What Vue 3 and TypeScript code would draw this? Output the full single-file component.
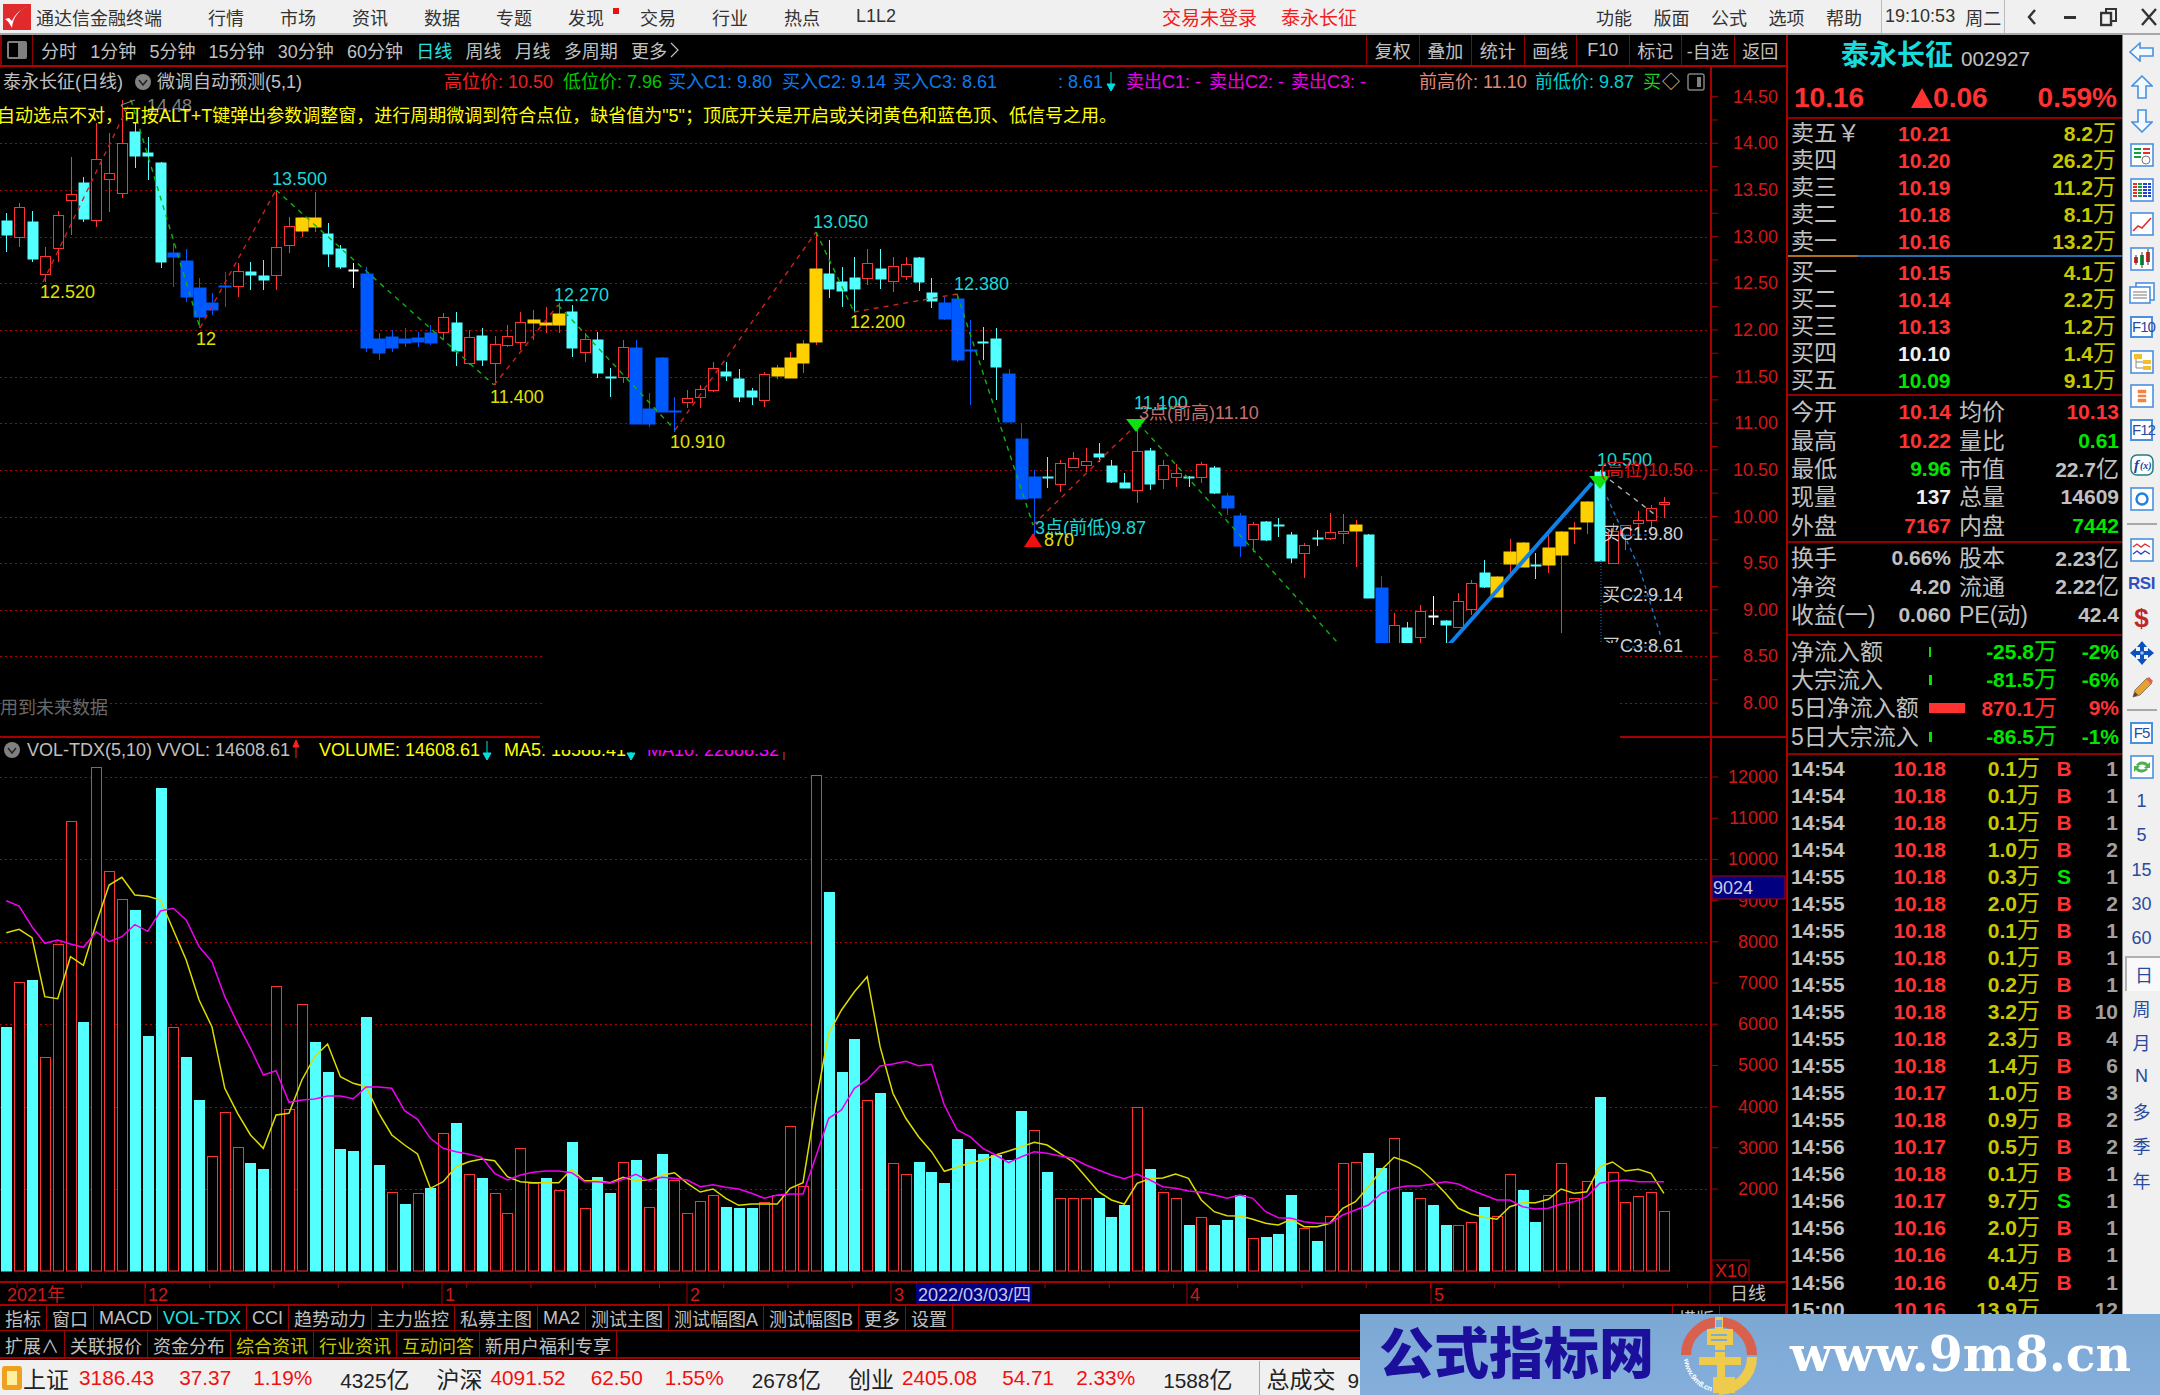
<template>
  <div class="app">
    <header class="topbar">
      <svg class="logo" width="28" height="26" viewBox="0 0 28 26">
        <rect width="28" height="26" fill="#e02a2c" />
        <path d="M25 2 C16 6 10 13 9 24 C7 20 5 17 2 15 L6 14 L9 17 C12 10 18 5 25 2 Z" fill="#fff" />
      </svg>
      <span class="brand">通达信金融终端</span>
      <nav class="menu">
        <span v-for="m in menus" :key="m" class="menu-item" :class="{ found: m === '发现' }">{{ m }}</span>
      </nav>
      <span class="login">交易未登录</span>
      <span class="login stock">泰永长征</span>
      <span class="sys first">功能</span>
      <span class="sys">版面</span>
      <span class="sys">公式</span>
      <span class="sys">选项</span>
      <span class="sys">帮助</span>
      <div class="clock">
        <span>19:10:53</span>
        <span class="week">周二</span>
      </div>
      <div class="win-btns">
        <svg width="16" height="20" viewBox="0 0 16 20"><path d="M11 3 L5 10 L11 17" fill="none" stroke="#333" stroke-width="2.4" /></svg>
        <svg width="14" height="20" viewBox="0 0 14 20"><rect x="1" y="9" width="12" height="3" fill="#333" /></svg>
        <svg width="18" height="20" viewBox="0 0 18 20"><rect x="6" y="2" width="10" height="12" fill="none" stroke="#333" stroke-width="2" /><rect x="1" y="6" width="10" height="12" fill="#f0f0f0" stroke="#333" stroke-width="2.4" /></svg>
        <svg width="16" height="20" viewBox="0 0 16 20"><path d="M1 2 L15 18 M15 2 L1 18" stroke="#333" stroke-width="2.4" /></svg>
      </div>
    </header>

    <div class="main">
      <section class="left">
        <div class="toolbar">
          <div class="tb-icon"><span></span></div>
          <div class="periods">
            <span v-for="p in periods" :key="p" :class="{ on: p === '日线' }">{{ p }}</span>
            <span class="more">更多<svg width="11" height="18" viewBox="0 0 11 18"><path d="M2 2 L9 9 L2 16" fill="none" stroke="#c0c0c0" stroke-width="1.2" /></svg></span>
          </div>
          <div class="tb-btns">
            <span v-for="b in barBtns" :key="b">{{ b }}</span>
          </div>
        </div>

        <svg class="chart" width="1786" height="1239" viewBox="0 67 1786 1239">
          <!-- grid -->
          <line v-for="g in grid" :key="'g' + g" class="grid" x1="0" x2="1711" :y1="g" :y2="g" />

          <!-- candles -->
          <g v-for="(c, i) in candles" :key="'c' + i">
            <line :x1="c.cx" :x2="c.cx" :y1="c.high" :y2="c.low" :stroke="c.wick" />
            <rect :x="c.x" :y="c.top" :width="c.w" :height="c.h" :fill="c.fill" :stroke="c.stroke" />
          </g>

          <!-- zigzag -->
          <polyline v-for="(z, i) in zigzags" :key="'z' + i" :points="z.pts" fill="none" :stroke="z.color" stroke-width="1.4" stroke-dasharray="5 5" />
          <line x1="1440" y1="655" x2="1592" y2="483" stroke="#0f80e8" stroke-width="4" />
          <polyline points="1607,497 1640,570 1661,637" fill="none" stroke="#1c78d0" stroke-width="1.4" stroke-dasharray="4 4" />
          <line x1="1601" y1="560" x2="1601" y2="642" stroke="#1c78d0" stroke-dasharray="1 2" />
          <line x1="1620" y1="535" x2="1660" y2="535" stroke="#1c78d0" stroke-dasharray="3 3" />
          <line x1="1620" y1="596" x2="1660" y2="596" stroke="#1c78d0" stroke-dasharray="3 3" />
          <line x1="1620" y1="647" x2="1660" y2="647" stroke="#1c78d0" stroke-dasharray="3 3" />
          <polygon points="1126,419 1146,419 1136,432" fill="#10e010" />
          <polygon points="1589,476 1610,476 1600,489" fill="#10e010" />
          <polygon points="1033,533 1024,547 1042,547" fill="#f01010" />

          <!-- volume -->
          <rect v-for="(b, i) in volBars" :key="'v' + i" :x="b.x" :y="b.y" width="10" :height="b.h" :fill="b.up ? '#000' : '#54ffff'" :stroke="b.up ? '#ff3232' : '#54ffff'" />
          <polyline :points="ma5" fill="none" stroke="#dcdc00" stroke-width="1.5" />
          <polyline :points="ma10" fill="none" stroke="#f000f0" stroke-width="1.5" />

          <!-- labels, legend rows -->
          <text v-for="(t, i) in labels" :key="'t' + i" :x="t[0]" :y="t[1]" :fill="t[3]" class="lbl">{{ t[2] }}</text>
          <circle cx="143" cy="82" r="8" fill="#808080" />
          <path d="M139 80 L143 85 L147 80" fill="none" stroke="#222" stroke-width="1.5" />
          <circle cx="12" cy="750" r="8" fill="#808080" />
          <path d="M8 748 L12 753 L16 748" fill="none" stroke="#222" stroke-width="1.5" />
          <rect x="1688" y="74" width="16" height="16" rx="2" fill="none" stroke="#808080" stroke-width="1.5" />
          <rect x="1697" y="77" width="4" height="10" fill="#808080" />
          <path d="M1111 72 V88 M1107 84 L1111 91 L1115 84 Z" stroke="#00e0e0" fill="#00e0e0" />
          <path d="M296 741 V758 M293 747 L296 740 L299 747 Z" stroke="#ff2020" fill="#ff2020" />
          <path d="M487 741 V757 M483 753 L487 760 L491 753 Z" stroke="#00e0e0" fill="#00e0e0" />
          <path d="M631 752 V757 M627 753 L631 760 L635 753 Z" stroke="#00e0e0" fill="#00e0e0" />
          <line x1="784" y1="752" x2="784" y2="760" stroke="#ff3030" />
          <path d="M121 105 L135 100 M121 105 L126 112" stroke="#909090" fill="none" />

          <!-- painted-out area of the original shot -->
          <rect x="543" y="643" width="1077" height="107" fill="#000" />
          <line x1="0" x2="540" y1="737" y2="737" class="frame" stroke-width="2" />
          <line x1="1620" x2="1786" y1="737" y2="737" class="frame" stroke-width="2" />

          <!-- axis -->
          <line x1="1711" x2="1711" y1="67" y2="1282" class="frame" stroke-width="2" />
          <g v-for="a in priceAxis" :key="'p' + a.y">
            <line x1="1711" x2="1718" :y1="a.y" :y2="a.y" class="frame" />
            <text v-if="a.text" x="1778" :y="a.y" text-anchor="end" class="lbl axis-lbl">{{ a.text }}</text>
          </g>
          <g v-for="a in volAxis" :key="'a' + a.y">
            <line x1="1711" x2="1718" :y1="a.y" :y2="a.y" class="frame" />
            <text x="1778" :y="a.y" text-anchor="end" class="lbl axis-lbl">{{ a.text }}</text>
          </g>
          <rect x="1712" y="876" width="73" height="23" fill="#000080" stroke="#b00000" />
          <text x="1713" y="887.5" class="lbl" fill="#c8c8e8">9024</text>
          <rect x="1712" y="1260" width="37" height="22" fill="#000" class="frame" />
          <text x="1715" y="1271" class="lbl axis-lbl">X10</text>

          <!-- date row -->
          <line x1="0" x2="1786" y1="1282" y2="1282" class="frame" stroke-width="2" />
          <line x1="0" x2="1786" y1="1305" y2="1305" class="frame" stroke-width="2" />
          <line x1="1710" x2="1710" y1="1282" y2="1306" class="frame" />
          <line v-for="x in minorTicks" :key="'m' + x" :x1="x" :x2="x" y1="1283" y2="1288" class="frame" />
          <g v-for="d in dates" :key="d[1]">
            <line :x1="d[0]" :x2="d[0]" y1="1282" y2="1305" class="frame" />
            <text :x="d[0] + 3" y="1295" class="lbl axis-lbl">{{ d[1] }}</text>
          </g>
          <text x="7" y="1295" class="lbl axis-lbl">2021年</text>
          <rect x="916" y="1284" width="116" height="20" fill="#000080" />
          <text x="918" y="1295" class="lbl" fill="#c8c8e8">2022/03/03/四</text>
          <text x="1730" y="1294" class="lbl" fill="#c0c0c0">日线</text>
        </svg>

        <div class="tabs">
          <span v-for="t in tabs1" :key="t" :class="{ on: t === 'VOL-TDX' }">{{ t }}</span>
          <span class="tab-right">横版</span>
          <span class="tab-end"></span>
        </div>
        <div class="tabs second">
          <span>扩展∧</span>
          <span v-for="t in tabs2" :key="t" :class="{ hot: t.endsWith('资讯') || t === '互动问答' }">{{ t }}</span>
        </div>
      </section>

      <aside class="panel">
        <div class="title"><b>泰永长征</b><span>002927</span></div>
        <div class="nowline"><b>10.16</b><b class="chg"><i></i>0.06</b><b class="pct">0.59%</b></div>

        <div class="book">
          <div v-for="r in sells" :key="r[0]" class="book-row">
            <span>{{ r[0] }}</span><b :class="r[3]">{{ r[1] }}</b><b class="vol">{{ r[2] }}<em>万</em></b>
          </div>
          <div class="book-split"></div>
          <div v-for="r in buys" :key="r[0]" class="book-row">
            <span>{{ r[0] }}</span><b :class="r[3]">{{ r[1] }}</b><b class="vol">{{ r[2] }}<em>万</em></b>
          </div>
        </div>

        <div class="stats">
          <div v-for="r in stats1" :key="r[0]" class="stat-row">
            <div><span>{{ r[0] }}</span><b :class="r[2]">{{ r[1] }}</b></div>
            <div><span>{{ r[3] }}</span><b :class="r[5]">{{ r[4] }}<em v-if="r[6]">{{ r[6] }}</em></b></div>
          </div>
        </div>
        <div class="stats pad">
          <div v-for="r in stats2" :key="r[0]" class="stat-row">
            <div><span>{{ r[0] }}</span><b>{{ r[1] }}</b></div>
            <div><span>{{ r[2] }}</span><b>{{ r[3] }}<em v-if="r[4]">{{ r[4] }}</em></b></div>
          </div>
        </div>
        <div class="flows">
          <div v-for="r in flows" :key="r.name" class="flow-row" :class="r.up ? 'red' : 'green'">
            <span class="flow-name">{{ r.name }}</span>
            <div class="flow-mid"><i :style="{ width: r.bar + 'px' }"></i><b>{{ r.val }}<em>万</em></b></div>
            <b class="flow-pct">{{ r.pct }}</b>
          </div>
        </div>
        <div class="ticks">
          <div v-for="(t, i) in ticks" :key="i" class="tick">
            <b class="gray">{{ t[0] }}</b>
            <b class="red">{{ t[1] }}</b>
            <b class="vol">{{ t[2] }}<em>万</em></b>
            <b class="bs" :class="t[3] === 'S' ? 'green' : 'red'">{{ t[3] }}</b>
            <b class="gray num">{{ t[4] }}</b>
          </div>
        </div>
      </aside>

      <aside class="tools">
        <div class="tool"><svg width="26" height="20" viewBox="0 0 26 20"><path d="M1 10 L11 1 V6 H24 V14 H11 V19 Z" class="arrow" /></svg></div>
        <div class="tool"><svg width="22" height="24" viewBox="0 0 22 24"><path d="M11 1 L21 11 H15 V23 H7 V11 H1 Z" class="arrow" /></svg></div>
        <div class="tool"><svg width="22" height="24" viewBox="0 0 22 24"><path d="M11 23 L21 13 H15 V1 H7 V13 H1 Z" class="arrow" /></svg></div>
        <div class="tool"><svg width="24" height="24" viewBox="0 0 24 24"><rect x="1" y="1" width="22" height="22" class="ibox" /><path d="M4 6 H11 M4 10 H11 M4 14 H11" stroke="#10a040" stroke-width="2" /><path d="M13 6 H20 M13 10 H20" stroke="#e03030" stroke-width="2" /><circle cx="16" cy="17" r="4" fill="#fff" stroke="#777" /></svg></div>
        <div class="tool"><svg width="24" height="24" viewBox="0 0 24 24"><rect x="1" y="1" width="22" height="22" class="ibox" /><path d="M5 5 V19" stroke="#e03030" stroke-width="4" stroke-dasharray="2 1" /><path d="M10 5 V19" stroke="#10a040" stroke-width="4" stroke-dasharray="2 1" /><path d="M15 5 V19" stroke="#2040d0" stroke-width="4" stroke-dasharray="2 1" /><path d="M19.5 5 V19" stroke="#2040d0" stroke-width="3" stroke-dasharray="2 1" /></svg></div>
        <div class="tool"><svg width="24" height="24" viewBox="0 0 24 24"><rect x="1" y="1" width="22" height="22" class="ibox" /><polyline points="3,19 8,14 12,16 21,6" fill="none" stroke="#e03030" stroke-width="1.6" /></svg></div>
        <div class="tool"><svg width="24" height="24" viewBox="0 0 24 24"><rect x="1" y="1" width="22" height="22" class="ibox" /><rect x="4" y="10" width="4" height="6" fill="#e03030" /><rect x="10" y="8" width="4" height="10" fill="#10a040" /><rect x="16" y="5" width="4" height="10" fill="#e03030" /><path d="M6 8 V18 M12 5 V21 M18 2 V18" stroke="#333" /></svg></div>
        <div class="tool"><svg width="26" height="24" viewBox="0 0 26 24"><rect x="7" y="2" width="18" height="17" class="ibox" /><rect x="1" y="6" width="20" height="16" class="ibox" /><path d="M4 11 H18 M4 14 H18 M4 17 H18" stroke="#777" /></svg></div>
        <div class="tool"><span class="kbox">F10</span></div>
        <div class="tool"><svg width="24" height="24" viewBox="0 0 24 24"><rect x="1" y="1" width="22" height="22" class="ibox" /><rect x="4" y="4" width="8" height="5" fill="#f0c030" /><rect x="13" y="10" width="8" height="4" fill="#f0c030" /><rect x="13" y="16" width="8" height="4" fill="#f0c030" /><path d="M6 9 V18 H13 M6 12 H13" fill="none" stroke="#888" /></svg></div>
        <div class="tool"><svg width="24" height="24" viewBox="0 0 24 24"><rect x="1" y="1" width="22" height="22" class="ibox" /><path d="M7 5 H17 V19 H7 Z M7 10 H17 M7 14 H17" fill="#f88040" stroke="#fff" stroke-width="1.5" /></svg></div>
        <div class="tool"><span class="kbox">F12</span></div>
        <div class="tool"><svg width="24" height="24" viewBox="0 0 24 24"><rect x="1" y="2" width="22" height="20" rx="6" fill="#fff" stroke="#208080" stroke-width="1.5" /><text x="4" y="17" class="fx">f</text><text x="10" y="16" class="fx small">(x)</text></svg></div>
        <div class="tool"><svg width="24" height="24" viewBox="0 0 24 24"><rect x="1" y="1" width="22" height="22" class="ibox" /><circle cx="12" cy="12" r="5.5" fill="none" stroke="#2080e0" stroke-width="2.4" /></svg></div>
        <div class="tool-sep"></div>
        <div class="tool"><svg width="24" height="24" viewBox="0 0 24 24"><rect x="1" y="1" width="22" height="22" class="ibox" /><path d="M3 9 L7 6 L11 9 L15 6 L20 9" fill="none" stroke="#e03030" stroke-width="1.4" /><path d="M3 16 L7 13 L11 16 L15 13 L20 16" fill="none" stroke="#3040d0" stroke-width="1.4" /></svg></div>
        <div class="tool"><span class="rsi">RSI</span></div>
        <div class="tool"><span class="dollar">$</span></div>
        <div class="tool"><svg width="24" height="24" viewBox="0 0 24 24"><path d="M12 0 L17 6 H14 V10 H18 V7 L24 12 L18 17 V14 H14 V18 H17 L12 24 L7 18 H10 V14 H6 V17 L0 12 L6 7 V10 H10 V6 H7 Z" fill="#0a50c0" /><circle cx="12" cy="12" r="1.8" fill="#9cc0f0" /></svg></div>
        <div class="tool"><svg width="24" height="24" viewBox="0 0 24 24"><path d="M3 22 L5 15 L17 3 L22 8 L10 20 Z" fill="#e8a030" stroke="#908060" /><path d="M16 4 L21 9 L23 6 L19 2 Z" fill="#e06060" /><path d="M3 22 L5 17 L8 20 Z" fill="#444" /></svg></div>
        <div class="tool-sep short"></div>
        <div class="tool"><span class="kbox">F5</span></div>
        <div class="tool"><svg width="24" height="24" viewBox="0 0 24 24"><rect x="1" y="1" width="22" height="22" class="ibox" /><path d="M6 10 A7 6 0 0 1 18 9 L20 7 V13 H14 L16 11 A5 4 0 0 0 8 11 Z M18 14 A7 6 0 0 1 6 15 L4 17 V11 H10 L8 13 A5 4 0 0 0 16 13 Z" fill="#50b050" /></svg></div>
        <div v-for="t in sideKeys" :key="t" class="tool key" :class="{ sel: t === '日' }">{{ t }}</div>
      </aside>
    </div>

    <footer class="ticker">
      <i class="tk-icon"></i>
      <template v-for="g in indices" :key="g[0]">
        <span class="tk-name">{{ g[0] }}</span>
        <span class="tk-val">{{ g[1] }}</span>
        <span class="tk-chg">{{ g[2] }}</span>
        <span class="tk-pct">{{ g[3] }}</span>
        <span class="tk-amt">{{ g[4] }}<em>亿</em></span>
      </template>
      <span class="tk-total">总成交</span>
      <span class="tk-amt plain">9302<em>亿</em></span>
    </footer>

    <div class="watermark">
      <span class="wm-cn">公式指标网</span>
      <svg class="wm-logo" width="80" height="80" viewBox="0 0 80 80">
        <path d="M7 40 A33 33 0 0 1 73 40" fill="none" stroke="#d9604d" stroke-width="10" />
        <path d="M73 42 A33 33 0 0 1 40 75" fill="none" stroke="#eecb4c" stroke-width="10" />
        <path d="M36 2 H44 V14 H54 V30 H46 V42 H62 V50 H46 V62 H56 V78 H34 V62 H38 V50 H20 V42 H36 V30 H28 V14 H36 Z" fill="#eecb4c" />
        <rect x="37" y="5" width="6" height="7" fill="#7fa9d6" />
        <path d="M32 20 H48 M32 25 H48 M30 36 H50" stroke="#7fa9d6" stroke-width="2" />
        <path id="wmArc" d="M5 44 A36 36 0 0 0 36 77" fill="none" />
        <text class="wm-small"><textPath href="#wmArc">www.9m8.cn</textPath></text>
      </svg>
      <span class="wm-en">www.9m8.cn</span>
    </div>
  </div>
</template>

<script setup lang="ts">
type Kind = 'r' | 'c' | 'b' | 'y' | 'w'
type Raw = [Kind, number, number, number, number]

const menus = ['行情', '市场', '资讯', '数据', '专题', '发现', '交易', '行业', '热点', 'L1L2']
const periods = ['分时', '1分钟', '5分钟', '15分钟', '30分钟', '60分钟', '日线', '周线', '月线', '多周期']
const barBtns = ['复权', '叠加', '统计', '画线', 'F10', '标记', '-自选', '返回']
const tabs1 = ['指标', '窗口', 'MACD', 'VOL-TDX', 'CCI', '趋势动力', '主力监控', '私募主图', 'MA2', '测试主图', '测试幅图A', '测试幅图B', '更多', '设置']
const tabs2 = ['关联报价', '资金分布', '综合资讯', '行业资讯', '互动问答', '新用户福利专享']
const sideKeys = ['1', '5', '15', '30', '60', '日', '周', '月', 'N', '多', '季', '年']

// high, body top, body bottom, low: all in page pixels
const raw: Raw[] = [
  ['c', 213, 220, 235, 252], ['r', 203, 207, 237, 247], ['c', 211, 221, 259, 262], ['r', 247, 256, 274, 282], ['r', 211, 215, 248, 262],
  ['r', 157, 194, 200, 235], ['c', 177, 182, 219, 222], ['r', 123, 159, 220, 227], ['r', 133, 173, 179, 212], ['r', 100, 143, 193, 198],
  ['c', 123, 131, 156, 168], ['c', 137, 152, 156, 180], ['c', 162, 162, 262, 268], ['b', 243, 252, 257, 287], ['b', 249, 260, 297, 302],
  ['b', 278, 287, 317, 328], ['b', 293, 302, 310, 315], ['b', 272, 285, 287, 307], ['r', 263, 271, 286, 297], ['c', 262, 271, 275, 290],
  ['c', 260, 275, 280, 290], ['r', 190, 247, 275, 290], ['r', 217, 226, 245, 253], ['y', 217, 217, 231, 237], ['y', 192, 217, 227, 232],
  ['c', 223, 233, 254, 267], ['c', 245, 248, 267, 269], ['w', 263, 269, 270, 288], ['b', 267, 273, 348, 352], ['b', 333, 338, 353, 360],
  ['b', 330, 336, 348, 352], ['b', 328, 338, 343, 347], ['b', 332, 337, 342, 347], ['b', 325, 332, 343, 345], ['r', 313, 317, 332, 340],
  ['c', 312, 322, 351, 366], ['r', 330, 337, 363, 365], ['c', 328, 335, 360, 366], ['r', 336, 344, 363, 385], ['r', 325, 336, 345, 347],
  ['r', 312, 322, 342, 350], ['y', 310, 319, 323, 340], ['y', 307, 322, 325, 333], ['y', 303, 313, 325, 333], ['c', 305, 311, 348, 357],
  ['r', 333, 339, 352, 362], ['c', 332, 339, 373, 378], ['c', 368, 376, 377, 397], ['r', 340, 347, 377, 383], ['b', 340, 347, 424, 424],
  ['b', 393, 408, 424, 427], ['b', 357, 357, 412, 412], ['b', 397, 410, 411, 432], ['r', 390, 398, 402, 408], ['r', 385, 389, 397, 408],
  ['r', 362, 368, 390, 392], ['c', 362, 371, 376, 381], ['c', 369, 378, 397, 402], ['c', 388, 390, 397, 405], ['r', 372, 374, 400, 407],
  ['y', 365, 367, 376, 379], ['y', 352, 357, 378, 378], ['y', 340, 343, 363, 373], ['y', 232, 268, 342, 345], ['c', 240, 273, 289, 298],
  ['c', 267, 281, 291, 307], ['c', 257, 277, 289, 312], ['r', 249, 263, 278, 285], ['c', 249, 268, 279, 289], ['r', 257, 266, 281, 292],
  ['r', 257, 264, 276, 280], ['c', 257, 257, 282, 291], ['c', 278, 292, 301, 308], ['b', 297, 302, 319, 320], ['b', 294, 298, 360, 362],
  ['b', 320, 349, 351, 405], ['c', 327, 341, 343, 360], ['c', 328, 338, 367, 400], ['b', 369, 373, 422, 422], ['b', 423, 438, 499, 500],
  ['b', 470, 476, 498, 537], ['c', 457, 476, 478, 488], ['r', 460, 463, 484, 492], ['r', 452, 458, 467, 468], ['r', 448, 461, 465, 472],
  ['c', 443, 453, 457, 462], ['c', 460, 465, 482, 483], ['c', 473, 482, 488, 488], ['r', 420, 451, 490, 503], ['c', 448, 450, 484, 490],
  ['r', 460, 465, 479, 489], ['r', 464, 473, 477, 487], ['c', 476, 476, 477, 487], ['r', 462, 464, 477, 483], ['c', 466, 467, 493, 494],
  ['b', 493, 495, 508, 515], ['b', 513, 515, 546, 557], ['r', 522, 524, 539, 552], ['c', 521, 521, 540, 541], ['c', 518, 524, 526, 537],
  ['c', 532, 534, 558, 563], ['r', 543, 545, 553, 578], ['c', 530, 537, 538, 546], ['r', 513, 532, 538, 540], ['r', 514, 531, 533, 544],
  ['y', 520, 524, 531, 567], ['c', 534, 534, 598, 598], ['b', 576, 587, 660, 660], ['r', 613, 625, 660, 660], ['c', 622, 627, 660, 660],
  ['r', 605, 611, 637, 643], ['w', 596, 615, 616, 625], ['c', 620, 620, 625, 660], ['r', 593, 601, 627, 627], ['r', 580, 583, 609, 615],
  ['c', 560, 572, 587, 588], ['y', 576, 576, 597, 597], ['y', 539, 551, 564, 577], ['y', 542, 542, 567, 567], ['c', 553, 564, 566, 579],
  ['y', 535, 547, 565, 573], ['y', 531, 531, 555, 633], ['y', 522, 527, 529, 544], ['y', 501, 501, 522, 534], ['c', 470, 471, 561, 561],
  ['r', 523, 531, 563, 563], ['r', 525, 525, 535, 550], ['r', 511, 520, 523, 530], ['r', 505, 508, 520, 530], ['r', 497, 502, 503, 518],
]

const bodyFill: Record<Kind, string> = { r: '#000', c: '#54ffff', b: '#0058ff', y: '#ffd000', w: '#fff' }
const wickColor: Record<Kind, string> = { r: '#ff3232', c: '#54ffff', b: '#0058ff', y: '#ff3232', w: '#fff' }
const bodyWidth: Record<Kind, number> = { r: 10, c: 11, b: 13, y: 13, w: 10 }

const barX = (i: number) => 6.3 + 12.85 * i
// snap to the pixel grid so 1px strokes stay bright
const snap = (v: number) => Math.round(v) + 0.5

const candles = raw.map((c, i) => ({
  cx: snap(barX(i)),
  x: snap(barX(i) - bodyWidth[c[0]] / 2),
  w: bodyWidth[c[0]],
  high: c[1],
  top: snap(c[2]),
  h: Math.max(c[3] - c[2], 2),
  low: c[4],
  fill: bodyFill[c[0]],
  stroke: c[0] === 'r' ? '#ff3232' : 'none',
  wick: wickColor[c[0]],
}))

// volume pane: y is stored at 3x of the offset from y=760
const volKinds =
  'crcrrrcrrrcccrccrrrccrrrccccccrcrcrcrcrrrrcrcrccrcrcrrrrcccrrrrrcccrcrrcccccccccrcrrrcccrcrrcrcccrcccrcrrrccrcrccrrcrrccrrrrcrrrrr'
const volTops = [
  800, 665, 660, 890, 553, 183, 786, 21, 332, 418, 449, 827, 83, 800, 890, 1020, 1188, 1057, 1160, 1209, 1227, 679, 1048, 733, 845, 935,
  1168, 1173, 772, 1214, 1296, 1331, 1300, 1285, 1120, 1088, 1242, 1254, 1300, 1359, 1165, 1268, 1254, 1291, 1146, 1345, 1250, 1299, 1206,
  1200, 1341, 1182, 1260, 1359, 1322, 1305, 1340, 1344, 1344, 1327, 1305, 1097, 1278, 44, 395, 935, 836, 1021, 998, 1210, 1242, 1205, 1236,
  1268, 1137, 1168, 1182, 1186, 1200, 1052, 1111, 1236, 1314, 1314, 1314, 1313, 1371, 1335, 1040, 1227, 1296, 1314, 1394, 1372, 1394, 1380,
  1305, 1435, 1430, 1421, 1304, 1404, 1443, 1368, 1210, 1206, 1178, 1223, 1134, 1295, 1314, 1335, 1394, 1394, 1385, 1340, 1368, 1242, 1290,
  1385, 1305, 1210, 1314, 1264, 1011, 1237, 1327, 1309, 1296, 1354,
]
const volY = (v: number) => 760 + v / 3

const volBars = volTops.map((v, i) => ({
  x: snap(barX(i) - 5),
  y: snap(volY(v)),
  h: 1271 - snap(volY(v)),
  up: volKinds[i] === 'r',
}))

const ma5Raw = [
  518, 508, 533, 710, 716, 590, 616, 490, 375, 352, 405, 409, 420, 510, 600, 720, 800, 985, 1060, 1125, 1165, 1065, 1060, 960, 890, 852, 950,
  970, 980, 1060, 1125, 1155, 1182, 1285, 1265, 1220, 1205, 1197, 1202, 1250, 1265, 1268, 1268, 1268, 1228, 1262, 1262, 1268, 1252, 1262,
  1260, 1246, 1238, 1270, 1296, 1287, 1315, 1336, 1332, 1332, 1332, 1285, 1268, 1030, 820, 750, 695, 650, 860, 1000, 1075, 1130, 1175, 1234,
  1222, 1208, 1200, 1185, 1173, 1160, 1147, 1155, 1180, 1205, 1250, 1295, 1320, 1332, 1270, 1256, 1254, 1242, 1255, 1320, 1355, 1367, 1368,
  1378, 1390, 1395, 1378, 1400, 1400, 1390, 1345, 1325, 1280, 1230, 1192, 1205, 1225, 1260, 1300, 1345, 1362, 1372, 1378, 1340, 1328, 1328,
  1318, 1287, 1300, 1295, 1220, 1206, 1233, 1228, 1240, 1300,
]
const ma10Raw = [
  422, 438, 500, 550, 540, 552, 562, 515, 545, 530, 494, 514, 453, 445, 480, 560, 605, 710, 790, 865, 945, 932, 1027, 1020, 1017, 1008, 1008,
  1016, 981, 981, 985, 1052, 1078, 1135, 1165, 1175, 1183, 1192, 1240, 1260, 1245, 1237, 1233, 1233, 1238, 1265, 1265, 1270, 1258, 1243, 1262,
  1252, 1255, 1260, 1280, 1274, 1282, 1287, 1300, 1315, 1305, 1302, 1302, 1190, 1075, 1050, 985, 960, 918, 912, 904, 917, 913, 1035, 1110,
  1130, 1165, 1185, 1208, 1190, 1175, 1180, 1188, 1195, 1215, 1230, 1245, 1256, 1242, 1260, 1280, 1285, 1293, 1297, 1305, 1315, 1305, 1315,
  1355, 1373, 1375, 1385, 1390, 1390, 1365, 1350, 1335, 1300, 1285, 1278, 1278, 1272, 1265, 1272, 1290, 1305, 1320, 1320, 1340, 1347, 1345,
  1332, 1325, 1310, 1270, 1263, 1260, 1265, 1265, 1265,
]
const toPoints = (arr: number[]) => arr.map((v, i) => `${barX(i).toFixed(1)},${volY(v).toFixed(1)}`).join(' ')
const ma5 = toPoints(ma5Raw)
const ma10 = toPoints(ma10Raw)

const priceY = (p: number) => 143.3 + (14 - p) * 93.3
const grid: number[] = []
for (let p = 14; p >= 8; p -= 0.5) grid.push(snap(priceY(p)))
for (let v = 12000; v >= 2000; v -= 2000) grid.push(snap(1189 + (2000 - v) * 0.0412))

const priceAxis: { y: number; text: string }[] = []
for (let n = 0; n <= 26; n++) {
  const p = 14.5 - n * 0.25
  priceAxis.push({ y: priceY(p), text: n % 2 === 0 ? p.toFixed(2) : '' })
}
const volAxis: { y: number; text: string }[] = []
for (let v = 12000; v >= 2000; v -= 1000) volAxis.push({ y: 1189 + (2000 - v) * 0.0412, text: String(v) })

const zigzags = [
  { color: '#d02020', pts: '43,282 131,100' },
  { color: '#10b010', pts: '131,100 200,328' },
  { color: '#d02020', pts: '200,328 276,190' },
  { color: '#10b010', pts: '276,190 365,270 430,328 494,385' },
  { color: '#d02020', pts: '494,385 558,305' },
  { color: '#10b010', pts: '558,305 675,430' },
  { color: '#d02020', pts: '675,430 816,232' },
  { color: '#10b010', pts: '816,232 854,312' },
  { color: '#d02020', pts: '854,312 957,294' },
  { color: '#10b010', pts: '957,294 1033,525' },
  { color: '#d02020', pts: '1033,525 1138,423' },
  { color: '#10b010', pts: '1138,423 1337,642' },
  { color: '#b0b0b0', pts: '1610,480 1658,517' },
]

const cy = '#18d8d8'
const ye = '#e0e000'
const gr = '#c0c0c0'
const bl = '#0a7cf0'
const mg = '#e800e8'
const labels: [number, number, string, string][] = [
  [3, 82, '泰永长征(日线)', gr],
  [157, 82, '微调自动预测(5,1)', gr],
  [444, 82, '高位价: 10.50', '#f02020'],
  [563, 82, '低位价: 7.96', '#00c800'],
  [668, 82, '买入C1: 9.80', bl],
  [782, 82, '买入C2: 9.14', bl],
  [893, 82, '买入C3: 8.61', bl],
  [1058, 82, ': 8.61', bl],
  [1126, 82, '卖出C1: -', mg],
  [1209, 82, '卖出C2: -', mg],
  [1291, 82, '卖出C3: -', mg],
  [1419, 82, '前高价: 11.10', '#e08878'],
  [1535, 82, '前低价: 9.87', '#00d0d0'],
  [1643, 82, '买', '#20d020'],
  [1662, 82, '◇', gr],
  [147, 106, '14.48', '#808080'],
  [-3, 116, '自动选点不对，可按ALT+T键弹出参数调整窗，进行周期微调到符合点位，缺省值为"5"；顶底开关是开启或关闭黄色和蓝色顶、低信号之用。', '#ffff00'],
  [40, 292, '12.520', ye],
  [196, 339, '12', ye],
  [272, 179, '13.500', cy],
  [554, 295, '12.270', cy],
  [813, 222, '13.050', cy],
  [954, 284, '12.380', cy],
  [850, 322, '12.200', ye],
  [490, 397, '11.400', ye],
  [670, 442, '10.910', ye],
  [1134, 403, '11.100', cy],
  [1139, 413, '3点(前高)11.10', '#c87070'],
  [1035, 528, '3点(前低)9.87', cy],
  [1044, 540, '870', ye],
  [1597, 460, '10.500', cy],
  [1600, 470, '(高位)10.50', '#d81818'],
  [1602, 534, '买C1:9.80', '#d0d0d0'],
  [1602, 595, '买C2:9.14', '#d0d0d0'],
  [1602, 646, '买C3:8.61', '#d0d0d0'],
  [0, 708, '用到未来数据', '#686868'],
  [27, 750, 'VOL-TDX(5,10)', gr],
  [157, 750, 'VVOL: 14608.61', gr],
  [319, 750, 'VOLUME: 14608.61', '#ffff00'],
  [504, 750, 'MA5: 18588.41', '#ffff00'],
  [647, 750, 'MA10: 22888.32', '#ff00ff'],
]

const dates: [number, string][] = [
  [145, '12'],
  [442, '1'],
  [687, '2'],
  [891, '3'],
  [1187, '4'],
  [1431, '5'],
]
const minorTicks: number[] = []
for (let x = 17; x < 1700; x += 64.25) minorTicks.push(x)

const sells: [string, string, string, string][] = [
  ['卖五￥', '10.21', '8.2', 'red'],
  ['卖四', '10.20', '26.2', 'red'],
  ['卖三', '10.19', '11.2', 'red'],
  ['卖二', '10.18', '8.1', 'red'],
  ['卖一', '10.16', '13.2', 'red'],
]
const buys: [string, string, string, string][] = [
  ['买一', '10.15', '4.1', 'red'],
  ['买二', '10.14', '2.2', 'red'],
  ['买三', '10.13', '1.2', 'red'],
  ['买四', '10.10', '1.4', 'white'],
  ['买五', '10.09', '9.1', 'green'],
]
const stats1: [string, string, string, string, string, string, string][] = [
  ['今开', '10.14', 'red', '均价', '10.13', 'red', ''],
  ['最高', '10.22', 'red', '量比', '0.61', 'green', ''],
  ['最低', '9.96', 'green', '市值', '22.7', 'gray', '亿'],
  ['现量', '137', 'white', '总量', '14609', 'gray', ''],
  ['外盘', '7167', 'red', '内盘', '7442', 'green', ''],
]
const stats2: [string, string, string, string, string][] = [
  ['换手', '0.66%', '股本', '2.23', '亿'],
  ['净资', '4.20', '流通', '2.22', '亿'],
  ['收益(一)', '0.060', 'PE(动)', '42.4', ''],
]
const flows = [
  { name: '净流入额', bar: 2, val: '-25.8', pct: '-2%', up: false },
  { name: '大宗流入', bar: 3, val: '-81.5', pct: '-6%', up: false },
  { name: '5日净流入额', bar: 36, val: '870.1', pct: '9%', up: true },
  { name: '5日大宗流入', bar: 3, val: '-86.5', pct: '-1%', up: false },
]
const ticks: [string, string, string, string, string][] = [
  ['14:54', '10.18', '0.1', 'B', '1'],
  ['14:54', '10.18', '0.1', 'B', '1'],
  ['14:54', '10.18', '0.1', 'B', '1'],
  ['14:54', '10.18', '1.0', 'B', '2'],
  ['14:55', '10.18', '0.3', 'S', '1'],
  ['14:55', '10.18', '2.0', 'B', '2'],
  ['14:55', '10.18', '0.1', 'B', '1'],
  ['14:55', '10.18', '0.1', 'B', '1'],
  ['14:55', '10.18', '0.2', 'B', '1'],
  ['14:55', '10.18', '3.2', 'B', '10'],
  ['14:55', '10.18', '2.3', 'B', '4'],
  ['14:55', '10.18', '1.4', 'B', '6'],
  ['14:55', '10.17', '1.0', 'B', '3'],
  ['14:55', '10.18', '0.9', 'B', '2'],
  ['14:56', '10.17', '0.5', 'B', '2'],
  ['14:56', '10.18', '0.1', 'B', '1'],
  ['14:56', '10.17', '9.7', 'S', '1'],
  ['14:56', '10.16', '2.0', 'B', '1'],
  ['14:56', '10.16', '4.1', 'B', '1'],
  ['14:56', '10.16', '0.4', 'B', '1'],
  ['15:00', '10.16', '13.9', '', '12'],
]
const indices: [string, string, string, string, string][] = [
  ['上证', '3186.43', '37.37', '1.19%', '4325'],
  ['沪深', '4091.52', '62.50', '1.55%', '2678'],
  ['创业', '2405.08', '54.71', '2.33%', '1588'],
]
</script>

<style>
html,
body {
  margin: 0;
  background: #000;
}
</style>

<style scoped>
.app {
  position: relative;
  width: 2160px;
  height: 1395px;
  overflow: hidden;
  display: flex;
  flex-direction: column;
  background: #000;
  font-family: "Liberation Sans", "Noto Sans CJK SC", sans-serif;
  color: #c0c0c0;
}

/* top bar */
.topbar {
  height: 33px;
  flex: none;
  display: flex;
  align-items: center;
  background: #f0f0f0;
  border-bottom: 2px solid #a8a8a8;
  color: #333;
  font-size: 18px;
}
.logo {
  margin-left: 3px;
}
.brand {
  margin-left: 5px;
}
.menu {
  display: flex;
  align-items: center;
  margin-left: 46px;
  gap: 36px;
}
.menu-item {
  position: relative;
  min-width: 36px;
}
.found::after {
  content: "";
  position: absolute;
  right: -15px;
  top: 4px;
  width: 6px;
  height: 6px;
  background: #e81010;
}
.login {
  color: #f02020;
  margin-left: 266px;
  font-size: 19px;
}
.stock {
  margin-left: 24px;
}
.sys {
  margin-left: 21.5px;
}
.first {
  margin-left: 239px;
}
.clock {
  display: flex;
  align-self: stretch;
  align-items: center;
  gap: 10px;
  margin-left: 19px;
  padding: 0 3px;
  border-left: 1px solid #bbb;
  border-right: 1px solid #bbb;
}
.win-btns {
  display: flex;
  align-items: center;
  gap: 23px;
  margin-left: 19px;
}

/* layout */
.main {
  flex: 1;
  display: flex;
  min-height: 0;
}
.left {
  width: 1786px;
  flex: none;
  display: flex;
  flex-direction: column;
}
.toolbar {
  height: 32px;
  flex: none;
  display: flex;
  align-items: center;
  box-sizing: border-box;
  border-bottom: 2px solid #b00000;
  font-size: 18px;
}
.tb-icon {
  width: 33px;
  height: 100%;
  box-sizing: border-box;
  border-left: 2px solid #900000;
  border-right: 1px solid #900000;
  display: flex;
  align-items: center;
  justify-content: center;
}
.tb-icon span {
  width: 16px;
  height: 14px;
  border: 2px solid #808080;
  border-radius: 2px;
  background: linear-gradient(90deg, #000 55%, #808080 55%);
}
.periods {
  display: flex;
  margin-left: 8px;
  gap: 13.2px;
  white-space: nowrap;
}
.periods .on {
  color: #20e0e0;
}
.more {
  display: flex;
  align-items: center;
  gap: 2px;
}
.tb-btns {
  margin-left: auto;
  display: flex;
  height: 100%;
}
.tb-btns span {
  width: 52.5px;
  box-sizing: border-box;
  border-left: 1px solid #900000;
  display: flex;
  align-items: center;
  justify-content: center;
}
.chart {
  display: block;
  flex: none;
  background: #000;
}
.lbl {
  font-size: 18px;
  dominant-baseline: central;
  white-space: pre;
}
.axis-lbl {
  fill: #d01818;
}
.grid {
  stroke: #b00000;
  stroke-dasharray: 2 3;
}
.frame {
  stroke: #a80000;
}
.tabs {
  height: 25px;
  flex: none;
  display: flex;
  box-sizing: border-box;
  border-bottom: 1px solid #a00000;
  font-size: 18px;
}
.second {
  height: 28px;
  border-bottom: 2px solid #a00000;
}
.second span {
  padding-top: 2px;
}
.tabs span {
  padding-left: 5px;
  padding-right: 5px;
  display: flex;
  align-items: center;
  border-right: 1px solid #a00000;
  white-space: nowrap;
}
.tabs .on {
  color: #20e0e0;
}
.tabs .hot {
  color: #c8c800;
}
.tabs .tab-right {
  margin-left: auto;
  border-left: 1px solid #a00000;
}
.tabs .tab-end {
  width: 66px;
  box-sizing: border-box;
}

/* quote panel */
.panel {
  width: 336px;
  flex: none;
  box-sizing: border-box;
  border-left: 2px solid #a80000;
  overflow: hidden;
  font-size: 23px;
}
.panel b {
  font-size: 21px;
}
.panel em {
  font-style: normal;
  font-weight: 400;
  font-size: 23px;
}
.red {
  color: #ff3232;
}
.green {
  color: #00e600;
}
.white {
  color: #f0f0f0;
}
.gray {
  color: #c0c0c0;
}
.title {
  height: 41px;
  display: flex;
  align-items: center;
  padding-left: 53px;
  gap: 8px;
}
.panel .title b {
  font-size: 28px;
  color: #18dcdc;
  line-height: 38px;
}
.title span {
  font-size: 20.7px;
  margin-top: 7px;
}
.nowline {
  height: 43px;
  box-sizing: border-box;
  display: flex;
  align-items: center;
  padding: 2px 5px 0 6px;
  border-bottom: 2px solid #900000;
  color: #ff3232;
}
.panel .nowline b {
  font-size: 28px;
}
.nowline .chg {
  display: flex;
  align-items: center;
  margin-left: 47px;
}
.nowline i {
  width: 0;
  height: 0;
  border-left: 11px solid transparent;
  border-right: 11px solid transparent;
  border-bottom: 20px solid #ff3232;
}
.nowline .pct {
  margin-left: auto;
}
.book {
  padding-top: 1px;
  border-bottom: 2px solid #900000;
}
.book-row {
  height: 27.1px;
  display: grid;
  grid-template-columns: 107px 53px 1fr;
  align-items: center;
  padding: 0 6px 0 3px;
  line-height: 27px;
}
.vol {
  color: #c8c800;
  text-align: right;
}
.book-split {
  height: 2px;
  margin-bottom: 1px;
  background: linear-gradient(90deg, #b07020 70px, #2070b0 70px);
}
.stats {
  padding: 1px 0 1px 3px;
  border-bottom: 2px solid #900000;
}
.book + .stats {
  padding-top: 2px;
}
.pad {
  padding-bottom: 5px;
}
.stat-row {
  height: 28.4px;
  display: grid;
  grid-template-columns: 160px 160px;
  column-gap: 8px;
  line-height: 28px;
}
.stat-row div {
  display: flex;
  justify-content: space-between;
  align-items: center;
  white-space: nowrap;
}
.flows {
  padding: 1px 3px 2px 3px;
  border-bottom: 2px solid #900000;
}
.flow-row {
  height: 28.4px;
  display: grid;
  grid-template-columns: 138px 128px 1fr;
  align-items: center;
  line-height: 28px;
  white-space: nowrap;
}
.flow-name {
  color: #c0c0c0;
}
.flow-mid {
  display: flex;
  justify-content: space-between;
  align-items: center;
}
.flow-mid i {
  height: 10px;
  background: currentColor;
}
.flow-pct {
  text-align: right;
}
.ticks {
  padding-left: 3px;
}
.tick {
  height: 27.05px;
  display: grid;
  grid-template-columns: 100px 55px 94px 48px 30px;
  align-items: center;
  line-height: 27px;
}
.tick .red {
  text-align: right;
}
.tick .bs {
  text-align: center;
}
.tick .num {
  text-align: right;
  color: #a0a0a0;
}

/* right toolbar */
.tools {
  flex: 1;
  background: #f0f0f0;
  border-left: 1px solid #888;
  display: flex;
  flex-direction: column;
  align-items: center;
  overflow: hidden;
}
.tool {
  height: 34.4px;
  width: 100%;
  flex: none;
  display: flex;
  align-items: center;
  justify-content: center;
}
.tool-sep {
  width: 30px;
  height: 16px;
  flex: none;
  background: linear-gradient(#a8a8a8, #a8a8a8) center / 100% 2px no-repeat;
}
.short {
  height: 11px;
}
.arrow {
  fill: #f4f9ff;
  stroke: #4a90e0;
  stroke-width: 1.6;
}
.ibox {
  fill: #fff;
  stroke: #4a90e0;
  stroke-width: 1.6;
}
.kbox {
  width: 23px;
  height: 22px;
  box-sizing: border-box;
  border: 2px solid #4a90e0;
  background: #fff;
  color: #2a4aa0;
  font-size: 15px;
  line-height: 18px;
  text-align: center;
  letter-spacing: -1px;
}
.fx {
  font: italic bold 15px "Liberation Serif", serif;
  fill: #2040a0;
}
.small {
  font-size: 10px;
}
.rsi {
  font-size: 17px;
  font-weight: 700;
  color: #3050c0;
  letter-spacing: -0.5px;
}
.dollar {
  font-size: 26px;
  font-weight: 700;
  color: #c02828;
}
.key {
  color: #2a4aa0;
  font-size: 18px;
}
.sel {
  background: #f9f9f9;
  border-top: 2px solid #b0b0b0;
  border-left: 2px solid #b0b0b0;
  box-sizing: border-box;
  margin-left: 3px;
}

/* bottom ticker */
.ticker {
  height: 35px;
  flex: none;
  display: flex;
  align-items: center;
  background: #f0f0f0;
  color: #222;
  font-size: 20.8px;
  white-space: nowrap;
}
.tk-icon {
  width: 20px;
  height: 24px;
  margin-left: 2px;
  box-sizing: border-box;
  border: 5px solid #f0a020;
  border-radius: 3px;
  background: #fff0a0;
}
.tk-name {
  font-size: 23px;
  margin-left: 27px;
}
.tk-icon + .tk-name {
  margin-left: 1px;
}
.tk-val,
.tk-chg,
.tk-pct {
  color: #f01010;
}
.tk-val {
  margin-left: 8px;
}
.tk-icon + .tk-name + .tk-val {
  margin-left: 10px;
}
.tk-chg {
  margin-left: 25px;
}
.tk-pct {
  margin-left: 22px;
}
.tk-amt {
  margin-left: 28px;
}
.tk-amt em {
  font-style: normal;
  font-size: 23px;
}
.tk-total {
  font-size: 23px;
  margin-left: 27px;
  padding-left: 6px;
  border-left: 1px solid #aaa;
}
.plain {
  margin-left: 12px;
}

/* site watermark, on top of the shot */
.watermark {
  position: absolute;
  left: 1360px;
  top: 1314px;
  width: 800px;
  height: 81px;
  display: flex;
  align-items: center;
  background: linear-gradient(#7ca8d4, #85aedb);
}
.wm-cn {
  margin-left: 19px;
  font-size: 55px;
  font-weight: 900;
  color: #1c0f9c;
  line-height: 1;
}
.wm-logo {
  margin-left: 25px;
}
.wm-small {
  font-size: 7.5px;
  fill: #fff;
  font-weight: 700;
}
.wm-en {
  margin-left: 31px;
  font-family: "DejaVu Serif", serif;
  font-weight: 700;
  font-size: 49px;
  color: #fff;
  line-height: 1;
}
</style>
